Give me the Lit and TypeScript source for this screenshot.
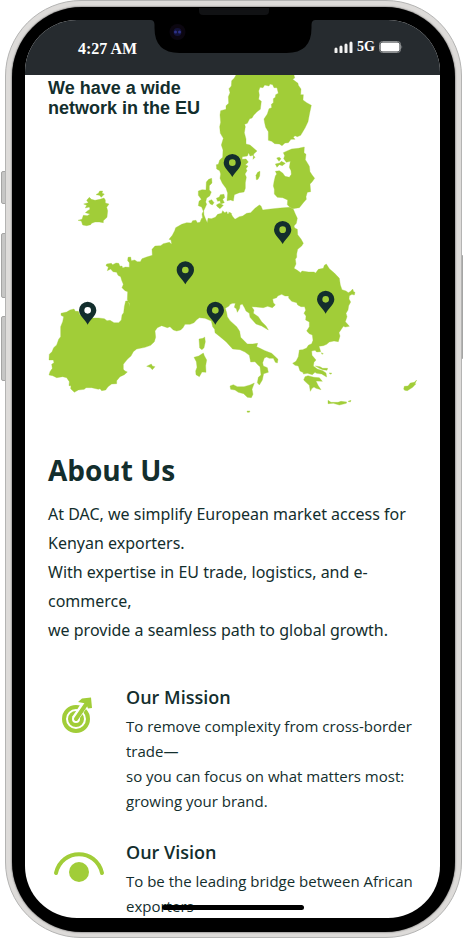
import { LitElement, html, svg, css } from "lit";
import { customElement } from "lit/decorators.js";

const PINS = [
  [697, 488],
  [848, 689],
  [977, 898],
  [646, 931],
  [263, 931],
  [556, 810],
];

@customElement("eu-map")
export class EuMap extends LitElement {
  static styles = css`
    :host {
      display: block;
    }
    .map {
      display: block;
      width: 100%;
      height: auto;
    }
    .land {
      fill: #a1cd38;
      stroke: #a1cd38;
      stroke-width: 1;
      stroke-linejoin: round;
    }
    .pin {
      fill: #132e2d;
      fill-rule: evenodd;
    }
  `;

  render() {
    return html`
      <svg class="map" viewBox="144 225 1107 1014" role="img" aria-label="Map of the European Union">
        <g class="land">
          <path
            d="M320 792L334 790 338 794 348 789 356 790 360 799 366 798 368 804 376 801 388 802 388 788 383 782 384 772 392 771 394 782 404 780 412 785 421 785 426 776 440 771 457 766 456 748 465 738 482 737 490 731 508 727 515 733 513 720 507 718 517 706 524 692 527 683 545 673 560 668 574 669 578 662 588 661 592 668 600 667 605 655 608 655 606 642 610 634 605 621 595 617 597 604 604 598 595 586 595 573 606 569 618 570 619 546 626 538 635 535 636 549 628 557 628 570 634 576 629 588 620 594 617 606 620 613 614 626 611 632 612 645 617 658 622 668 624 655 634 656 646 652 653 643 665 640 668 632 674 638 681 635 682 642 691 638 699 651 705 658 718 650 728 648 740 640 752 638 765 625 778 615 783 618 788 630 812 627 840 624 870 622 880 628 886 642 892 655 889 670 882 678 884 684 892 688 893 704 903 717 910 730 905 738 893 748 890 762 890 772 886 778 888 792 882 805 892 811 902 818 906 813 926 816 942 816 947 819 955 808 970 805 973 796 979 792 988 806 1003 819 1018 835 1021 855 1026 869 1038 873 1045 878 1052 874 1058 867 1061 875 1065 877 1063 885 1056 883 1048 887 1047 897 1052 906 1046 917 1044 930 1038 940 1041 950 1036 965 1043 973 1048 979 1036 981 1030 979 1017 998 1020 1008 1015 1025 1002 1023 988 1026 980 1033 970 1037 957 1039 960 1048 962 1055 950 1056 945 1051 935 1053 936 1066 948 1080 942 1087 940 1098 952 1107 968 1112 978 1119 980 1131 965 1122 950 1120 945 1117 937 1124 922 1120 910 1122 910 1118 900 1113 895 1098 885 1096 878 1090 888 1084 895 1070 898 1050 908 1049 920 1044 925 1036 935 1031 939 1021 937 1005 928 1001 920 993 928 980 928 966 917 960 918 948 912 940 917 931 914 920 903 920 893 915 890 908 875 904 866 894 866 888 855 888 845 883 833 888 830 893 818 897 820 908 826 915 817 923 803 919 790 923 755 920 762 930 760 940 775 950 785 965 798 978 805 990 785 978 768 972 750 952 748 940 738 933 734 924 727 912 720 915 719 925 712 937 709 926 703 922 706 910 698 910 690 913 687 918 676 925 680 938 682 950 690 962 710 980 719 994 722 1012 742 1032 758 1032 773 1030 770 1040 780 1045 795 1052 815 1060 834 1078 832 1089 826 1087 820 1075 808 1075 800 1071 793 1074 788 1088 790 1098 802 1103 805 1117 791 1121 787 1140 778 1155 772 1148 775 1132 783 1125 780 1100 774 1095 765 1085 752 1086 748 1066 735 1056 720 1049 698 1047 678 1025 660 1010 645 998 644 988 638 980 634 963 615 955 598 953 590 959 582 968 570 973 555 973 549 983 542 990 530 993 520 990 510 980 502 983 485 977 472 983 465 993 467 1012 463 1025 452 1036 435 1042 410 1047 400 1055 393 1068 382 1078 370 1093 370 1108 375 1113 382 1116 373 1124 360 1130 350 1142 350 1151 335 1152 324 1160 317 1170 305 1172 300 1166 295 1168 275 1163 258 1163 253 1168 235 1170 223 1177 212 1166 213 1157 207 1157 208 1145 200 1133 188 1130 170 1133 158 1127 147 1125 150 1115 157 1105 155 1093 162 1088 160 1080 147 1080 148 1063 156 1055 161 1043 170 1035 176 1018 182 1010 182 980 188 965 191 950 183 946 183 940 200 936 210 930 222 927 226 934 235 934 240 945 260 948 280 954 296 954 313 956 321 962 330 961 342 968 356 968 364 960 366 945 371 938 373 920 377 903 384 902 390 920 388 910 382 899 383 875 375 872 366 863 370 853 365 841 362 830 354 826 350 817 339 815 332 807 322 812 325 801 318 797Z"
          />
          <g transform="translate(570 210)">
            <path
              d="M138 15L133 24 125 32 124 48 117 56 120 68 115 80 116 100 108 107 108 118 92 122 90 135 92 157 89 170 91 190 100 205 94 225 99 240 98 262 89 270 85 283 79 284 80 297 89 302 92 312 90 325 97 340 108 355 113 369 111 392 122 390 130 393 133 374 148 368 162 366 166 355 166 338 169 322 165 312 171 302 168 296 174 288 166 285 175 276 168 267 156 268 157 260 172 258 176 248 180 258 190 256 195 262 189 268 191 252 201 243 188 232 180 225 168 222 168 207 163 188 166 170 164 163 172 160 179 146 186 144 191 136 201 125 211 118 214 94 206 88 208 75 206 63 210 52 219 53 224 45 237 48 240 42 248 44 252 53 261 53 265 70 257 74 256 82 250 86 250 98 244 103 245 113 237 116 232 132 222 147 224 159 227 172 235 185 235 211 245 214 254 221 268 222 276 227 285 219 295 218 303 208 315 208 310 202 315 197 322 200 332 196 345 174 354 155 359 129 364 106 350 98 339 90 340 74 332 74 333 57 325 46 324 40 308 28 314 24 312 15Z"
            />
            <path
              d="M280 248L291 243 305 237 325 235 343 231 342 248 348 253 346 269 354 282 358 289 360 305 367 316 374 325 366 336 360 342 362 365 352 367 348 380 349 388 340 398 328 413 308 416 298 410 292 404 293 390 278 383 262 382 253 372 253 358 250 348 252 335 256 318 260 312 256 304 268 302 278 309 285 319 298 322 304 313 303 302 298 292 301 274 289 277 281 266 284 257Z"
            />
            <path d="M256 282L269 279 274 274 286 280 277 287 268 284 261 292Z" />
            <path d="M260 264L268 262 273 266 267 274Z" />
            <path d="M198 316L203 307 210 304 209 318 204 328 199 329Z" />
            <path d="M56 393L65 389 72 398 67 405 60 401Z" />
            <path d="M79 385L88 381 91 374 102 373 104 383 98 388 103 398 92 402 90 392 83 394Z" />
            <path d="M79 405L88 400 100 406 90 416 82 410Z" />
            <path d="M116 426L125 431 121 436Z" />
          </g>
          <g transform="translate(120 540)">
            <path
              d="M148 52L154 58 165 61 180 58 192 54 196 60 196 69 207 72 200 82 203 92 201 112 190 122 190 128 178 126 165 126 155 130 152 134 140 137 128 135 124 123 114 121 126 118 130 106 142 107 150 102 136 98 143 92 150 88 148 81 136 84 140 76 131 72 145 68 140 61Z"
            />
            <path d="M176 39L179 33 188 33 186 40 193 42 184 52 178 46 168 44Z" />
          </g>
          <g transform="translate(120 840)">
            <path d="M320 259L334 252 337 258 345 260 337 269 330 262Z" />
          </g>
          <g transform="translate(570 840)">
            <path d="M27 177L39 175 44 171 46 185 42 203 36 209 29 204Z" />
            <path d="M12 232L26 228 40 219 43 227 50 240 47 257 48 277 36 276 28 290 18 284 17 273 21 262 19 245Z" />
            <path d="M120 318L130 314 142 320 162 320 180 315 193 309 186 328 189 343 184 353 172 352 161 341 145 337 135 330 122 328Z" />
            <path d="M171 393L180 393 178 397 172 397Z" />
            <path d="M345 290L354 287 372 292 388 293 397 304 378 303 384 316 393 329 378 325 372 321 366 325 361 334 358 316 348 307 341 300Z" />
            <path d="M376 258L390 260 398 265 413 265 411 271 398 269 388 265Z" />
            <path d="M414 361L423 367 444 367 453 364 470 366 469 370 448 375 430 370 414 371Z" />
            <path d="M474 364L483 361 481 366Z" />
            <path d="M641 327L643 319 654 318 661 309 673 307 680 300 674 313 678 311 668 322 652 332 644 331Z" />
            <path d="M394 218L400 221 396 223Z" />
            <path d="M417 279L425 279 423 283Z" />
          </g>
        </g>
        ${PINS.map(
          ([x, y]) => svg`
            <path
              class="pin"
              transform="translate(${x} ${y})"
              d="M0 43C-6 30 -26 16 -26 0A26 26 0 0 1 26 0C26 16 6 30 0 43ZM0 -10A10 10 0 1 0 0 10A10 10 0 1 0 0 -10Z"
            />
          `
        )}
      </svg>
    `;
  }
}

const missionIcon = html`
  <svg class="icon" viewBox="0 0 62 62" aria-hidden="true">
    <circle cx="28" cy="35" r="12" fill="none" stroke="#a1cd38" stroke-width="4" />
    <circle cx="28" cy="35" r="6" fill="none" stroke="#a1cd38" stroke-width="4" />
    <path d="M27 35L37 20" stroke="#fff" stroke-width="7" />
    <path d="M28 35L39 19" stroke="#a1cd38" stroke-width="4" stroke-linecap="round" />
    <path d="M30 18L34 14.500 43 13.500 44 24 40 24.500 38 19.500Z" fill="#a1cd38" />
  </svg>
`;

const visionIcon = html`
  <svg class="icon" viewBox="0 0 62 62" aria-hidden="true">
    <path d="M8 34C14 9 48 9 54 34" fill="none" stroke="#a1cd38" stroke-width="4" stroke-linecap="round" />
    <circle cx="31" cy="33" r="10" fill="#a1cd38" />
  </svg>
`;

@customElement("app-root")
export class AppRoot extends LitElement {
  static styles = css`
    :host {
      display: block;
      position: relative;
      box-sizing: border-box;
      height: 100vh;
      padding: 0 1px 0 5px;
      overflow: hidden;
      background: #fff;
      color: #132e2d;
      font-family: "Open Sans", "Noto Sans", sans-serif;
    }
    .key {
      position: absolute;
      left: 1px;
      width: 5px;
      box-sizing: border-box;
      border: 1px solid #a5a5a4;
      border-radius: 2px 0 0 2px;
      background: #c6c6c5;
    }
    .mute {
      top: 171px;
      height: 33px;
    }
    .up {
      top: 233px;
      height: 65px;
    }
    .down {
      top: 316px;
      height: 65px;
    }
    .power {
      left: auto;
      right: 0;
      top: 255px;
      width: 3px;
      height: 104px;
    }
    .rim {
      position: relative;
      box-sizing: border-box;
      height: 100%;
      padding: 6px 6px 5px;
      border: 1px solid #b4b4b3;
      border-radius: 76px;
      background: #dddbd9;
    }
    .bezel {
      position: relative;
      box-sizing: border-box;
      height: 100%;
      padding: 13px 15px 14px 13px;
      border-radius: 70px;
      background: #000;
      box-shadow: 0 0 2px #333;
    }
    .screen {
      position: relative;
      height: 100%;
      overflow: hidden;
      border-radius: 52px;
      background: #fff;
    }
    .status {
      display: flex;
      align-items: center;
      justify-content: space-between;
      box-sizing: border-box;
      height: 55px;
      padding: 2px 37px 0 53px;
      background: #262b2f;
      color: #fff;
      font: bold 16px/20px "Liberation Serif", serif;
    }
    .signals {
      display: flex;
      align-items: center;
      gap: 4px;
      font-size: 14px;
      padding-bottom: 4px;
    }
    .notch {
      position: absolute;
      z-index: 1;
      top: 0;
      left: 50%;
      width: 165px;
      height: 33px;
      transform: translateX(-50%);
    }
    .speaker {
      position: absolute;
      top: 1px;
      left: 50%;
      width: 70px;
      height: 7px;
      border-radius: 0 0 4px 4px;
      background: #111214;
      transform: translateX(-50%);
    }
    .content {
      padding: 0 23px;
    }
    .network {
      position: relative;
      margin: 0;
    }
    .caption {
      position: absolute;
      top: 3px;
      left: 0;
      font: bold 18px/20px "Liberation Sans", Arial, sans-serif;
    }
    .title {
      margin: 36px 0 9px;
      font-size: 28px;
      line-height: 42px;
      font-weight: 700;
    }
    .intro {
      margin: 0 0 39px;
      font-family: "Noto Sans", sans-serif;
      font-size: 16px;
      line-height: 29px;
    }
    .values {
      display: grid;
      gap: 25px;
    }
    .value {
      display: grid;
      grid-template-columns: 62px 1fr;
      column-gap: 16px;
      align-items: start;
    }
    .icon {
      display: block;
      width: 62px;
      height: 62px;
    }
    .name {
      margin: 0 0 3px;
      font-size: 18px;
      line-height: 27px;
      font-weight: 600;
    }
    .text {
      margin: 0;
      font-size: 15px;
      line-height: 25px;
    }
    .home {
      position: absolute;
      bottom: 8px;
      left: 50%;
      width: 142px;
      height: 5px;
      border-radius: 3px;
      background: #000;
      transform: translateX(-50%);
    }
  `;

  render() {
    return html`
      <span class="key mute"></span>
      <span class="key up"></span>
      <span class="key down"></span>
      <span class="key power"></span>
      <div class="rim">
        <div class="bezel">
          <span class="speaker"></span>
          <div class="screen">
            <svg class="notch" viewBox="0 0 165 33" aria-hidden="true">
              <path d="M0 0Q4 0 4 5V8Q4 33 29 33H136Q161 33 161 8V5Q161 0 165 0Z" fill="#000" />
              <circle cx="27" cy="12" r="8" fill="#0b0610" />
              <circle cx="27" cy="12" r="4" fill="#131238" />
              <circle cx="25" cy="12" r="1.500" fill="#2d3189" />
              <circle cx="29" cy="12" r="1.500" fill="#2d3189" />
            </svg>
            <header class="status">
              <time>4:27 AM</time>
              <span class="signals">
                <svg width="19" height="12" viewBox="0 0 19 12" aria-hidden="true">
                  <path
                    d="M2 8V11M7 6V11M12 4V11M17 2V11"
                    fill="none"
                    stroke="#f2f2f2"
                    stroke-width="3"
                    stroke-linecap="round"
                  />
                </svg>
                <span>5G</span>
                <svg width="24" height="12" viewBox="0 0 24 12" aria-hidden="true">
                  <rect x="0.500" y="0.500" width="21" height="11" rx="3" fill="none" stroke="#8c8f91" />
                  <rect x="1.500" y="1.500" width="19" height="9" rx="2" fill="#fff" />
                  <path d="M22.500 4Q24 6 22.500 8Z" fill="#8c8f91" />
                </svg>
              </span>
            </header>
            <main class="content">
              <figure class="network">
                <eu-map></eu-map>
                <figcaption class="caption">We have a wide<br />network in the EU</figcaption>
              </figure>
              <h1 class="title">About Us</h1>
              <p class="intro">
                At DAC, we simplify European market access for Kenyan exporters.<br />With expertise in EU trade,
                logistics, and e-commerce,<br />we provide a seamless path to global growth.
              </p>
              <section class="values">
                <article class="value">
                  ${missionIcon}
                  <div>
                    <h2 class="name">Our Mission</h2>
                    <p class="text">
                      To remove complexity from cross-border trade—<br />so you can focus on what matters most: growing
                      your brand.
                    </p>
                  </div>
                </article>
                <article class="value">
                  ${visionIcon}
                  <div>
                    <h2 class="name">Our Vision</h2>
                    <p class="text">To be the leading bridge between African exporters</p>
                  </div>
                </article>
              </section>
            </main>
            <span class="home"></span>
          </div>
        </div>
      </div>
    `;
  }
}
